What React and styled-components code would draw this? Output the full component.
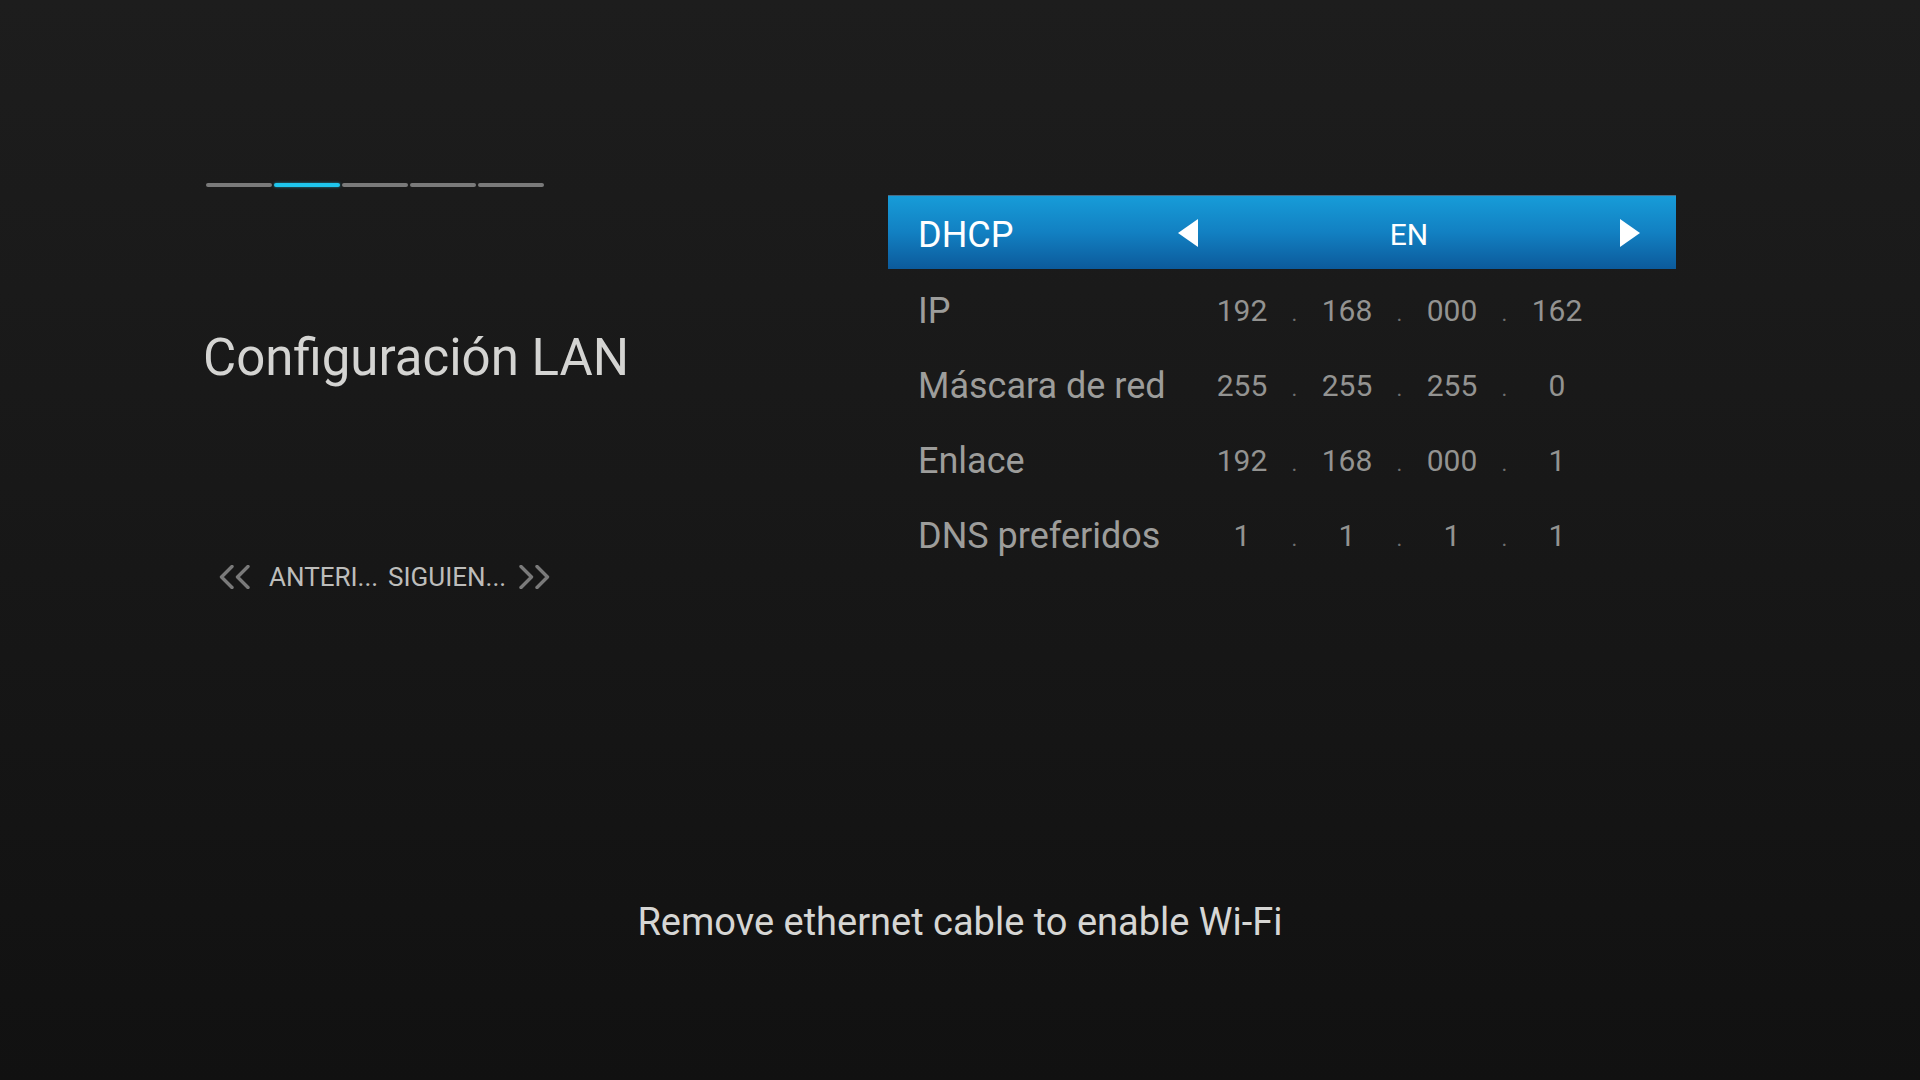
import styled, { createGlobalStyle } from 'styled-components';

const GlobalStyle = createGlobalStyle`
  html, body {
    margin: 0;
    padding: 0;
    background: #161616;
  }
  body {
    font-family: Roboto, "Noto Sans", "Liberation Sans", sans-serif;
  }
`;

const steps = [false, true, false, false, false];

const rows = [
  { label: 'IP', parts: ['192', '168', '000', '162'] },
  { label: 'Máscara de red', parts: ['255', '255', '255', '0'] },
  { label: 'Enlace', parts: ['192', '168', '000', '1'] },
  { label: 'DNS preferidos', parts: ['1', '1', '1', '1'] },
];

const Chevrons = ({ flip }) => (
  <ChevronSvg width="32" height="24" viewBox="0 0 32 24" flip={flip ? 1 : 0}>
    <polyline points="13,1.5 2.5,12 13,22.5" />
    <polyline points="29,1.5 18.5,12 29,22.5" />
  </ChevronSvg>
);

const Arrow = ({ right }) => (
  <ArrowSvg width="20" height="28" viewBox="0 0 20 28">
    {right ? <polygon points="0,0 20,14 0,28" /> : <polygon points="20,0 0,14 20,28" />}
  </ArrowSvg>
);

const App = () => {
  return (
    <Page>
      <GlobalStyle />
      <Main>
        <LeftColumn>
          <Progress>
            {steps.map((active, i) => (
              <Step key={i} active={active} />
            ))}
          </Progress>
          <Title>Configuración LAN</Title>
          <Nav>
            <Chevrons />
            <NavText>ANTERI...</NavText>
            <NavText>SIGUIEN...</NavText>
            <Chevrons flip />
          </Nav>
        </LeftColumn>

        <Panel>
          <SelectBar>
            <BarLabel>DHCP</BarLabel>
            <Arrow />
            <BarValue>EN</BarValue>
            <Arrow right />
          </SelectBar>
          {rows.map((row) => (
            <Row key={row.label}>
              <RowLabel>{row.label}</RowLabel>
              {row.parts.map((p, i) => (
                <Octet key={i}>
                  <Num>{p}</Num>
                  {i < 3 && <Dot>.</Dot>}
                </Octet>
              ))}
            </Row>
          ))}
        </Panel>
      </Main>

      <Footer>Remove ethernet cable to enable Wi-Fi</Footer>
    </Page>
  );
};

export default App;

const Page = styled.div`
  width: 1920px;
  height: 1080px;
  box-sizing: border-box;
  display: flex;
  flex-direction: column;
  justify-content: space-between;
  background: linear-gradient(180deg, #1d1d1d 0%, #181818 45%, #111111 100%);
  overflow: hidden;
`;

const Main = styled.div`
  display: flex;
  padding: 183px 0 0 206px;
`;

const LeftColumn = styled.div`
  width: 682px;
  display: flex;
  flex-direction: column;
  align-items: flex-start;
`;

const Progress = styled.div`
  display: flex;
  gap: 2px;
`;

const Step = styled.div`
  width: 66px;
  height: 4px;
  border-radius: 2px;
  background: ${(p) => (p.active ? '#1fc6ee' : '#7a7a7a')};
  box-shadow: ${(p) => (p.active ? '0 0 3px rgba(31, 198, 238, 0.6)' : 'none')};
`;

const Title = styled.h1`
  margin: 141px 0 0 -3px;
  font-size: 51px;
  line-height: 60px;
  font-weight: 400;
  color: #d4d4d2;
`;

const Nav = styled.div`
  margin-top: 174px;
  margin-left: 13px;
  display: flex;
  align-items: center;
  height: 30px;
`;

const ChevronSvg = styled.svg`
  fill: none;
  stroke: #7a7a7a;
  stroke-width: 3.4;
  stroke-linecap: round;
  stroke-linejoin: round;
  transform: ${(p) => (p.flip ? 'scaleX(-1)' : 'none')};
  margin: ${(p) => (p.flip ? '0 0 0 7px' : '0 13px 0 0')};
`;

const NavText = styled.span`
  font-size: 26px;
  line-height: 30px;
  color: #bdbdbb;
  margin: 0 5px;
`;

const Panel = styled.div`
  margin-top: 12px;
  width: 788px;
  display: flex;
  flex-direction: column;
`;

const SelectBar = styled.div`
  height: 74px;
  box-sizing: border-box;
  display: flex;
  align-items: center;
  padding: 4px 36px 0 30px;
  background: linear-gradient(180deg, #179cd8 0%, #1280c2 50%, #0c5a9b 100%);
  border-top: 1px solid #4a6c86;
`;

const BarLabel = styled.span`
  width: 260px;
  font-size: 36px;
  color: #ffffff;
`;

const ArrowSvg = styled.svg`
  fill: #ffffff;
  flex: none;
  margin-top: -3px;
`;

const BarValue = styled.span`
  flex: 1;
  text-align: center;
  font-size: 30px;
  color: #ffffff;
`;

const Row = styled.div`
  height: 75px;
  display: flex;
  align-items: center;
  padding-left: 30px;
  &:nth-child(2) {
    margin-top: 4px;
  }
`;

const RowLabel = styled.span`
  width: 289px;
  font-size: 36px;
  color: #9d9d9b;
  white-space: nowrap;
`;

const Octet = styled.div`
  display: flex;
  align-items: baseline;
`;

const Num = styled.span`
  width: 70px;
  text-align: center;
  font-size: 30px;
  color: #939391;
`;

const Dot = styled.span`
  width: 35px;
  text-align: center;
  font-size: 22px;
  color: #6f6f6f;
`;

const Footer = styled.div`
  padding-bottom: 136px;
  text-align: center;
  font-size: 38px;
  line-height: 44px;
  color: #d6d6d4;
`;
